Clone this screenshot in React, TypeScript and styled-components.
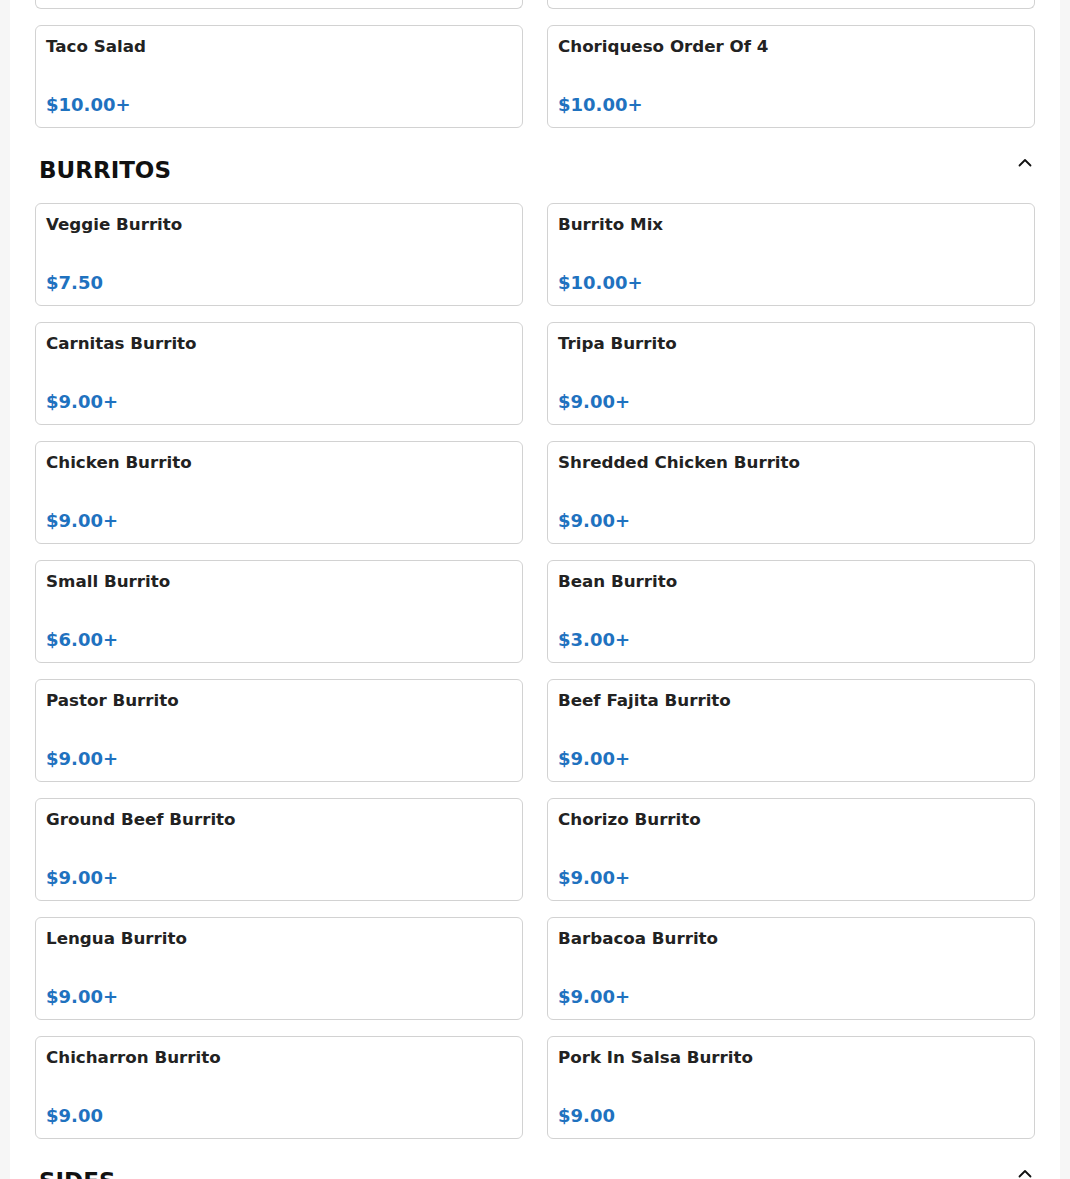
import React from 'react';
import styled, {createGlobalStyle} from "styled-components";

type Item = { name: string; price: string };

const previous: Item[] = [
    {name: "Taco Salad", price: "$10.00+"},
    {name: "Choriqueso Order Of 4", price: "$10.00+"},
];

const burritos: Item[] = [
    {name: "Veggie Burrito", price: "$7.50"},
    {name: "Burrito Mix", price: "$10.00+"},
    {name: "Carnitas Burrito", price: "$9.00+"},
    {name: "Tripa Burrito", price: "$9.00+"},
    {name: "Chicken Burrito", price: "$9.00+"},
    {name: "Shredded Chicken Burrito", price: "$9.00+"},
    {name: "Small Burrito", price: "$6.00+"},
    {name: "Bean Burrito", price: "$3.00+"},
    {name: "Pastor Burrito", price: "$9.00+"},
    {name: "Beef Fajita Burrito", price: "$9.00+"},
    {name: "Ground Beef Burrito", price: "$9.00+"},
    {name: "Chorizo Burrito", price: "$9.00+"},
    {name: "Lengua Burrito", price: "$9.00+"},
    {name: "Barbacoa Burrito", price: "$9.00+"},
    {name: "Chicharron Burrito", price: "$9.00"},
    {name: "Pork In Salsa Burrito", price: "$9.00"},
];

const ChevronUp = () => (
    <svg width="16" height="16" viewBox="0 0 16 16" fill="none">
        <path d="M2.5 10.5L8 5L13.5 10.5" stroke="#111" strokeWidth="1.8" strokeLinecap="round" strokeLinejoin="round"/>
    </svg>
);

const Grid = ({items}: { items: Item[] }) => (
    <CardGrid>
        {items.map((item) => (
            <Card key={item.name}>
                <Title>{item.name}</Title>
                <Price>{item.price}</Price>
            </Card>
        ))}
    </CardGrid>
);

const Section = ({title, items}: { title: string; items: Item[] }) => (
    <StyledSection>
        <Header>
            <Heading>{title}</Heading>
            <Toggle aria-label="collapse">
                <ChevronUp/>
            </Toggle>
        </Header>
        {items.length > 0 && <Grid items={items}/>}
    </StyledSection>
);

export default function App() {
    return (
        <>
            <GlobalStyle/>
            <Page>
                <Menu>
                    {/* bottom edge of the row scrolled above the viewport */}
                    <CardGrid>
                        <Card $clipped/>
                        <Card $clipped/>
                    </CardGrid>
                    <Spacer/>
                    <Grid items={previous}/>
                    <Section title="BURRITOS" items={burritos}/>
                    <Section title="SIDES" items={[]}/>
                </Menu>
            </Page>
        </>
    );
}

const GlobalStyle = createGlobalStyle`
  * {
    box-sizing: border-box;
  }

  body {
    margin: 0;
    background: #f6f6f6;
    font-family: "DejaVu Sans", "Liberation Sans", sans-serif;
    overflow: hidden;
  }
`

const Page = styled.div`
  padding: 0 10px;
  height: 1179px;
  overflow: hidden;
`

const Menu = styled.main`
  background: #ffffff;
  padding: 0 25px 40px;
  min-height: 100%;
`

const Spacer = styled.div`
  height: 16px;
`

const StyledSection = styled.section`
  padding-top: 29px;
`

const Header = styled.div`
  display: flex;
  justify-content: space-between;
  align-items: flex-start;
  padding: 0 2px 0 4px;
  margin-bottom: 20px;
`

const Heading = styled.h2`
  margin: 0;
  font-size: 23px;
  font-weight: 700;
  color: #111;
  line-height: normal;
`

const Toggle = styled.button`
  border: none;
  background: none;
  padding: 0;
  margin-top: -2px;
  width: 16px;
  height: 16px;
  display: flex;
  cursor: pointer;
`

const CardGrid = styled.div`
  display: grid;
  grid-template-columns: 1fr 1fr;
  gap: 16px 24px;
`

const Card = styled.div<{ $clipped?: boolean }>`
  height: ${({$clipped}) => ($clipped ? "9px" : "103px")};
  border: 1px solid #d2d2d2;
  border-top: ${({$clipped}) => ($clipped ? "none" : "1px solid #d2d2d2")};
  border-radius: ${({$clipped}) => ($clipped ? "0 0 6px 6px" : "6px")};
  padding: ${({$clipped}) => ($clipped ? "0" : "10px 10px 12px")};
  display: flex;
  flex-direction: column;
  justify-content: space-between;
  background: #fff;
`

const Title = styled.div`
  font-size: 16.7px;
  font-weight: 700;
  color: #222;
`

const Price = styled.div`
  font-size: 18px;
  font-weight: 700;
  color: #1f72bf;
`
